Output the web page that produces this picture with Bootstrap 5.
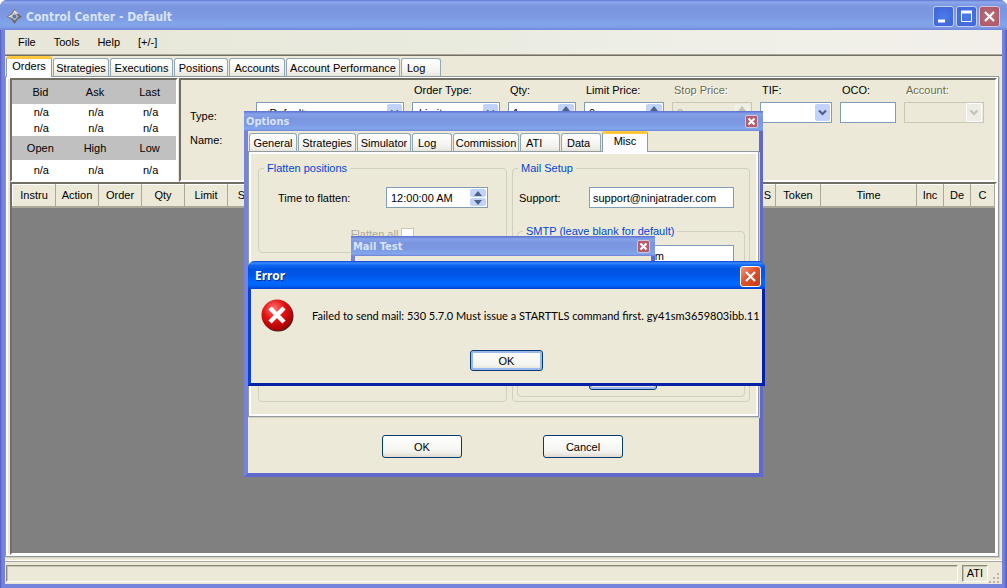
<!DOCTYPE html>
<html lang="en">
<head>
<meta charset="utf-8">
<meta name="viewport" content="width=device-width, initial-scale=1">
<title>Control Center - Default</title>
<link href="https://cdn.jsdelivr.net/npm/bootstrap@5.3.0/dist/css/bootstrap.min.css" rel="stylesheet">
<script src="https://cdn.jsdelivr.net/npm/bootstrap@5.3.0/dist/js/bootstrap.bundle.min.js"></script>
<style>
:root { --face: #ece9d8; --field-line: #7f9db9; --frame: #7484dc; --frame-dark: #5358bf; }
body { font: 11px/14px "Liberation Sans", Arial, sans-serif; color: #000; background: #fff; overflow: hidden; }
button, input, select { font: inherit; color: inherit; }
.app-window { min-height: 100vh; padding: 0 5px 4px; background: linear-gradient(90deg, var(--frame-dark), var(--frame) 2px, var(--frame) calc(100% - 3px), var(--frame-dark)); border-radius: 7px 7px 0 0; }
.title-strip { height: 30px; margin: 0 -5px; padding: 3px 7px 0 7px; border-radius: 7px 7px 0 0; color: #d8e4f8;
  font: bold 12px/16px "DejaVu Sans Condensed", "DejaVu Sans", sans-serif;
  background: linear-gradient(#6175d0 0, #8ea9ec 2px, #7f9ae3 5px, #7a96df 9px, #7c99e2 17px, #82a6ea 24px, #7f9ee6 27px, #7184d9 30px); }
.win-buttons { gap: 2px; }
.win-btn { width: 21px; height: 21px; padding: 0; border: 1px solid #c1cef0; border-radius: 3px; background: radial-gradient(#4b7dea, #3f62d6); display: flex; }
.win-btn.is-close { background: radial-gradient(#bd6d78, #a95667); border-color: #d5c5dc; }
.client { background: var(--face); flex: 1 1 auto; }
.menu-strip { height: 25px; padding: 0 13px; gap: 18px; background: linear-gradient(90deg, #e8e6d8, #e9ebdf 45%, #efefe7 70%, #f2efe9); border-bottom: 1px solid #aca899; }
.menu-strip a { color: #000; text-decoration: none; }
.main-area { border-top: 1px solid #716f64; padding-right: 3px; }
.tab-strip { border: 0; gap: 1px; flex-wrap: nowrap; align-items: flex-end; position: relative; margin: 0 0 -1px 1px; }
.tab-strip .nav-link { height: 19px; padding: 1px 0 0; line-height: 14px; color: #000; border: 1px solid #91a7b4; border-bottom-color: #919b9c; border-radius: 3px 3px 0 0; background: linear-gradient(#fff, #f4f3ee 70%, #e6e5dd); margin: 0; white-space: nowrap; }
.tab-strip .nav-link.active { height: 21px; padding: 0 0 4px; color: #000; border: 1px solid #919b9c; border-top: 3px solid #ffc73c; border-bottom: 0; background: #fcfcfe; }
.tab-strip .nav-link.text-start { padding-left: 5px; }
.tw-40 { width: 40px; } .tw-46 { width: 46px; } .tw-48 { width: 48px; } .tw-54 { width: 54px; } .tw-56 { width: 56px; } .tw-58 { width: 58px; } .tw-63 { width: 63px; } .tw-66 { width: 66px; } .tw-114 { width: 114px; }
.tab-page { background: var(--face); border: 1px solid #919b9c; box-shadow: inset 0 0 0 2px #fcfcfe, 1px 1px 0 #d0cfbf; }
.main-page { padding: 1px 1px 1px 4px; }
.sunken { border: 2px solid; border-color: #716f64 #fff #fff #716f64; }
.quote-wrap { margin-right: 1px; background: #fff; }
.quote-box { width: 164px; background: #fff; table-layout: fixed; margin: 0; text-align: center; }
.quote-box th { background: #c0c0c0; font-weight: 400; height: 24px; padding: 0 0 0 2px; vertical-align: middle; }
.quote-box td { height: 16px; padding: 0 0 0 4px; }
.quote-box .tall td { height: 20px; padding-top: 3px; vertical-align: top; }
.field { height: 21px; border: 1px solid var(--field-line); background-color: #fff; border-radius: 0; padding: 0 4px; width: 100%; display: block; }
select.field { appearance: none; padding: 1px 6px; background-repeat: no-repeat; background-position: right 1px center;
  background-image: url("data:image/svg+xml,%3Csvg xmlns='http://www.w3.org/2000/svg' width='15' height='17'%3E%3Crect width='15' height='17' rx='2' fill='%23c1d3fb'/%3E%3Cpath d='M4 6.500l3.500 3.500 3.500-3.500' fill='none' stroke='%234d6185' stroke-width='2.200'/%3E%3C/svg%3E"); }
select.field:disabled, input.field:disabled { background-color: var(--face); border-color: #c9c7ba; color: #aca899; opacity: 1; }
select.field:disabled { background-image: url("data:image/svg+xml,%3Csvg xmlns='http://www.w3.org/2000/svg' width='16' height='19'%3E%3Crect x='.5' y='.5' width='15' height='18' rx='1' fill='%23eeede5' stroke='%23fff'/%3E%3Cpath d='M4.500 7.500l3.500 3.500 3.500-3.500' fill='none' stroke='%23c4c2b5' stroke-width='2.200'/%3E%3C/svg%3E"); }
.spin-field { position: relative; }
.spin-pad { position: absolute; top: 2px; right: 2px; width: 16px; bottom: 2px; gap: 1px; }
.spin-pad button { height: 8px; flex: 1; padding: 0; border: 0; border-radius: 2px; background: #c1d3fb; display: flex; align-items: center; justify-content: center; }
.spin-pad button:disabled { background: #f0efe6; }
.f-148 { width: 148px; } .f-88 { width: 88px; } .f-68 { width: 68px; } .f-80 { width: 80px; } .f-72 { width: 72px; } .f-56 { width: 56px; } .f-102 { width: 102px; }
.order-form { height: 104px; padding: 3px 8px 0 9px; min-width: 0; }
.order-form .col-field { flex: none; }
.order-form .cap { height: 19px; padding-left: 2px; display: block; white-space: nowrap; }
.cap.off { color: #6e6a43; text-shadow: 1px 1px 0 #fff; }
.side-labels { width: 58px; flex: none; padding-top: 26px; display: grid; gap: 10px; align-content: start; }
.grid-box { background: #808080; flex: 1 1 auto; }
.grid-box table { width: 100%; table-layout: fixed; margin: 0; }
.grid-box th { height: 22px; padding: 0; font-weight: 400; text-align: center; vertical-align: middle; white-space: nowrap; overflow: hidden; background: var(--face); border: 1px solid; border-color: #fff #aca899 #aca899 #fff; border-bottom-width: 2px; }
.status-strip { height: 23px; margin-top: 4px; padding: 3px 2px 0 1px; border-top: 1px solid #aca899; box-shadow: 0 -1px 0 #fff; }
.status-cell { height: 17px; border: 1px solid; border-color: #8d8a7c #fff #fff #8d8a7c; box-shadow: inset 1px 1px 0 #c5c2b2; }
.status-strip .grip { flex: none; align-self: flex-end; }
.dialog-window { position: absolute; background: var(--face); border: solid var(--frame); border-width: 0 4px 4px; border-right-color: #6069cd; border-bottom-color: #6069cd; }
.dialog-title { height: 20px; margin: 0 -4px; padding: 1px 5px 0 2px; color: #d8e4f8; font: bold 11px/14px "DejaVu Sans Condensed", "DejaVu Sans", sans-serif; flex: none;
  background: linear-gradient(#5c70d0 0, #86a3e9 3px, #7b96e0 7px, #7c99e3 13px, #82a7ec 18px, #6f82d8 20px); }
.dialog-title .is-close { width: 13px; height: 13px; border-radius: 2px; }
.options-dialog { left: 244px; top: 111px; width: 519px; height: 366px; z-index: 1; }
.mail-dialog { left: 351px; top: 236px; width: 304px; height: 110px; z-index: 2; }
.error-dialog { left: 248px; top: 261px; width: 517px; height: 125px; z-index: 3; border-color: #0a3fd8; border-width: 0 3px 3px; border-radius: 7px 7px 0 0; border-bottom-color: #0321a6; border-right-color: #0321a6; }
.error-title { height: 28px; margin: 0 -3px; padding: 2px 4px 0 7px; border-radius: 7px 7px 0 0; color: #fff; text-shadow: 1px 1px 0 #0a2a8c; font: bold 12px/16px "Noto Sans", sans-serif;
  background: linear-gradient(#0b3fd2 0, #3a8dff 2px, #1069f2 4px, #0054e3 8px, #0056e8 14px, #0068ff 22px, #0062f5 25px, #0040cf 28px); }
.error-title .win-btn { border-color: #fff; background: linear-gradient(135deg, #ef9a80, #e0512c 45%, #c83c18); }
.error-body { padding: 10px 0 0 10px; gap: 18px; }
.error-body svg { flex: none; }
.error-text { font: 11px/14px Lato, sans-serif; white-space: nowrap; }
.group-box { border: 1px solid #d0d0bf; border-radius: 4px; padding: 0 4px; margin: 0; }
.group-box legend { float: none; width: auto; margin: 0 0 0 1px; padding: 0 3px; font-size: 11px; line-height: 14px; color: #0046d5; }
.push { border: 1px solid #003c74; border-radius: 3px; height: 23px; width: 80px; padding: 0; background: linear-gradient(#fff, #f3f3ee 75%, #dedbcf); }
.push.is-default { box-shadow: inset 0 0 0 2px #9cb9ee; }
.ok-btn { width: 73px; height: 21px; margin-top: 18px; }
.options-page { height: 266px; padding: 9px 8px 14px 9px; gap: 5px; }
.flatten-column { gap: 9px; }
.time-row { padding: 12px 14px 0 15px; }
.all-row { padding: 19px 0 11px; color: #aca899; gap: 3px; }
.tick { width: 13px; height: 13px; margin: 0; appearance: none; border: 1px solid #cac8bb; background: #fff; }
.mail-group { width: 238px; flex: none; }
.mail-row { padding: 12px 11px 0 2px; }
.mail-field { width: 145px; padding: 0 2px 0 3px; }
.smtp-group { margin-top: 16px; height: 173px; position: relative; }
.smtp-group .mail-field { margin: 7px 6px 0 auto; }
.test-btn { position: absolute; left: 71px; bottom: 6px; width: 68px; }
.dialog-actions { gap: 81px; padding: 18px 2px 0 0; }
</style>
</head>
<body>
<div class="app-window d-flex flex-column">
  <header class="title-strip d-flex align-items-center">
    <svg width="15" height="15" viewBox="0 0 15 15" aria-hidden="true"><path d="M7.500 0L10.500 4.500 15 7.500l-4.500 3L7.500 15l-3-4.500L0 7.500l4.500-3z" fill="#6b6870"/><path d="M7.500 1L5.200 5.200 1 7.500l4 1.800L7.500 5l4-.3z" fill="#e6e1da"/><path d="M7.500 3.500l4 4-4 4-4-4z" fill="#c9c4bd"/><circle cx="7.500" cy="7.500" r="2" fill="#5375ba"/></svg>
    <span class="flex-grow-1 ps-1">Control Center - Default</span>
    <span class="d-flex win-buttons">
      <button class="win-btn" aria-label="Minimize"><svg width="19" height="19"><path d="M4 14h7" stroke="#fff" stroke-width="3"/></svg></button>
      <button class="win-btn" aria-label="Maximize"><svg width="19" height="19"><path d="M4.500 4v10.500h10V4" fill="none" stroke="#fff"/><path d="M4 5h11" stroke="#fff" stroke-width="3"/></svg></button>
      <button class="win-btn is-close" aria-label="Close"><svg width="19" height="19"><path d="M5 5l9 9M14 5l-9 9" stroke="#fff" stroke-width="2.200"/></svg></button>
    </span>
  </header>

  <div class="client d-flex flex-column">
    <nav class="menu-strip d-flex align-items-center">
      <a href="#">File</a><a href="#">Tools</a><a href="#">Help</a><a href="#">[+/-]</a>
    </nav>
    <main class="main-area d-flex flex-column flex-grow-1">
      <div class="nav nav-tabs tab-strip" role="tablist">
        <button class="nav-link active tw-46" role="tab">Orders</button>
        <button class="nav-link tw-56" role="tab">Strategies</button>
        <button class="nav-link tw-63" role="tab">Executions</button>
        <button class="nav-link tw-54" role="tab">Positions</button>
        <button class="nav-link tw-56" role="tab">Accounts</button>
        <button class="nav-link tw-114" role="tab">Account Performance</button>
        <button class="nav-link tw-40 text-start" role="tab">Log</button>
      </div>
      <div class="tab-page main-page flex-grow-1 d-flex flex-column">
        <div class="d-flex">
          <div class="sunken quote-wrap">
            <table class="quote-box">
              <tr><th>Bid</th><th>Ask</th><th>Last</th></tr>
              <tr><td>n/a</td><td>n/a</td><td>n/a</td></tr>
              <tr><td>n/a</td><td>n/a</td><td>n/a</td></tr>
              <tr><th>Open</th><th>High</th><th>Low</th></tr>
              <tr class="tall"><td>n/a</td><td>n/a</td><td>n/a</td></tr>
            </table>
          </div>
          <form class="order-form sunken d-flex flex-grow-1 gap-2">
            <div class="side-labels"><label for="o-type">Type:</label><label for="o-name">Name:</label></div>
            <div class="col-field f-148"><span class="cap"></span>
              <select class="field mb-1" id="o-type"><option>&lt;Default&gt;</option></select>
              <input class="field" id="o-name"></div>
            <div class="col-field f-88"><label class="cap" for="o-kind">Order Type:</label><select class="field" id="o-kind"><option>Limit</option></select></div>
            <div class="col-field f-68"><label class="cap" for="o-qty">Qty:</label>
              <div class="spin-field"><input class="field" id="o-qty" value="1"><span class="spin-pad d-flex flex-column"><button type="button" aria-label="More"><svg width="8" height="5"><path d="M0 5l4-5 4 5z" fill="#4d6185"/></svg></button><button type="button" aria-label="Less"></button></span></div></div>
            <div class="col-field f-80"><label class="cap" for="o-limit">Limit Price:</label>
              <div class="spin-field"><input class="field" id="o-limit" value="0"><span class="spin-pad d-flex flex-column"><button type="button" aria-label="More"><svg width="8" height="5"><path d="M0 5l4-5 4 5z" fill="#4d6185"/></svg></button><button type="button" aria-label="Less"></button></span></div></div>
            <div class="col-field f-80"><label class="cap off" for="o-stop">Stop Price:</label>
              <div class="spin-field"><input class="field" id="o-stop" value="0" disabled><span class="spin-pad d-flex flex-column"><button type="button" disabled aria-label="More"><svg width="8" height="5"><path d="M0 5l4-5 4 5z" fill="#c4c2b5"/></svg></button><button type="button" disabled aria-label="Less"></button></span></div></div>
            <div class="col-field f-72"><label class="cap" for="o-tif">TIF:</label><select class="field" id="o-tif"><option></option></select></div>
            <div class="col-field f-56"><label class="cap" for="o-oco">OCO:</label><input class="field" id="o-oco"></div>
            <div class="col-field f-80"><label class="cap off" for="o-acct">Account:</label><select class="field" id="o-acct" disabled><option></option></select></div>
          </form>
        </div>
        <div class="grid-box sunken">
          <table>
            <colgroup><col style="width:43px"><col style="width:43px"><col style="width:43px"><col style="width:43px"><col style="width:43px"><col style="width:43px"><col><col style="width:16px"><col style="width:45px"><col style="width:96px"><col style="width:27px"><col style="width:27px"><col style="width:24px"></colgroup>
            <thead><tr><th>Instru</th><th>Action</th><th>Order</th><th>Qty</th><th>Limit</th><th>Stop</th><th></th><th>S</th><th>Token</th><th>Time</th><th>Inc</th><th>De</th><th>C</th></tr></thead>
          </table>
        </div>
      </div>
    </main>
    <footer class="status-strip d-flex">
      <div class="status-cell flex-grow-1"></div>
      <div class="status-cell ms-1 px-1">ATI</div>
      <svg class="grip" width="12" height="14"><path d="M9 3h2v2H9zM5 7h2v2H5zM9 7h2v2H9zM1 11h2v2H1zM5 11h2v2H5zM9 11h2v2H9z" fill="#b8b4a2"/></svg>
    </footer>
  </div>
</div>

<section class="dialog-window options-dialog d-flex flex-column" role="dialog" aria-label="Options">
  <div class="dialog-title d-flex align-items-center justify-content-between"><span>Options</span>
    <button class="win-btn is-close" aria-label="Close"><svg width="11" height="11"><path d="M2.500 2.500l6 6M8.500 2.500l-6 6" stroke="#fff" stroke-width="2"/></svg></button></div>
  <div class="nav nav-tabs tab-strip" role="tablist">
    <button class="nav-link tw-48" role="tab">General</button>
    <button class="nav-link tw-58" role="tab">Strategies</button>
    <button class="nav-link tw-54" role="tab">Simulator</button>
    <button class="nav-link tw-40 text-start" role="tab">Log</button>
    <button class="nav-link tw-66" role="tab">Commission</button>
    <button class="nav-link tw-40 text-start" role="tab">ATI</button>
    <button class="nav-link tw-40 text-start" role="tab">Data</button>
    <button class="nav-link active tw-46" role="tab">Misc</button>
  </div>
  <div class="tab-page options-page d-flex">
    <div class="flatten-column d-flex flex-column flex-grow-1">
      <fieldset class="group-box"><legend>Flatten positions</legend>
        <div class="time-row d-flex align-items-center justify-content-between">
          <label for="p-time">Time to flatten:</label>
          <div class="spin-field f-102"><input class="field" id="p-time" value="12:00:00 AM"><span class="spin-pad d-flex flex-column"><button aria-label="Later"><svg width="8" height="5"><path d="M0 5l4-5 4 5z" fill="#4d6185"/></svg></button><button aria-label="Earlier"><svg width="8" height="5"><path d="M0 0l4 5 4-5z" fill="#4d6185"/></svg></button></span></div>
        </div>
        <div class="all-row d-flex justify-content-center align-items-center"><label for="p-all">Flatten all</label><input class="tick" type="checkbox" id="p-all" disabled></div>
      </fieldset>
      <fieldset class="group-box flex-grow-1"></fieldset>
    </div>
    <fieldset class="group-box mail-group"><legend>Mail Setup</legend>
      <div class="mail-row d-flex align-items-center justify-content-between"><label for="m-sup">Support:</label><input class="field mail-field" id="m-sup" value="support@ninjatrader.com"></div>
      <fieldset class="group-box smtp-group"><legend>SMTP (leave blank for default)</legend>
        <input class="field mail-field" aria-label="Server" value="smtp.mail.com">
        <button class="push is-default test-btn">Test</button>
      </fieldset>
    </fieldset>
  </div>
  <div class="dialog-actions d-flex justify-content-center"><button class="push">OK</button><button class="push">Cancel</button></div>
</section>

<section class="dialog-window mail-dialog" role="dialog" aria-label="Mail Test">
  <div class="dialog-title d-flex align-items-center justify-content-between"><span>Mail Test</span>
    <button class="win-btn is-close" aria-label="Close"><svg width="11" height="11"><path d="M2.500 2.500l6 6M8.500 2.500l-6 6" stroke="#fff" stroke-width="2"/></svg></button></div>
</section>

<section class="dialog-window error-dialog" role="alertdialog" aria-label="Error">
  <div class="error-title d-flex align-items-center justify-content-between"><span>Error</span>
    <button class="win-btn" aria-label="Close"><svg width="19" height="19"><path d="M5 5l9 9M14 5l-9 9" stroke="#fff" stroke-width="2.200"/></svg></button></div>
  <div class="d-flex align-items-center error-body">
    <svg width="33" height="33" viewBox="0 0 33 33" aria-hidden="true"><defs><radialGradient id="ball" cx=".4" cy=".3" r=".7"><stop offset="0" stop-color="#f77"/><stop offset=".5" stop-color="#e31212"/><stop offset="1" stop-color="#a80000"/></radialGradient></defs><circle cx="17" cy="17" r="15.500" fill="#4a2020"/><circle cx="16" cy="16" r="15.500" fill="url(#ball)"/><path d="M9 9l14 14M23 9L9 23" stroke="#fff" stroke-width="4.500"/></svg>
    <span class="error-text">Failed to send mail: 530 5.7.0 Must issue a STARTTLS command first. gy41sm3659803ibb.11</span>
  </div>
  <div class="text-center"><button class="push is-default ok-btn">OK</button></div>
</section>
</body>
</html>
